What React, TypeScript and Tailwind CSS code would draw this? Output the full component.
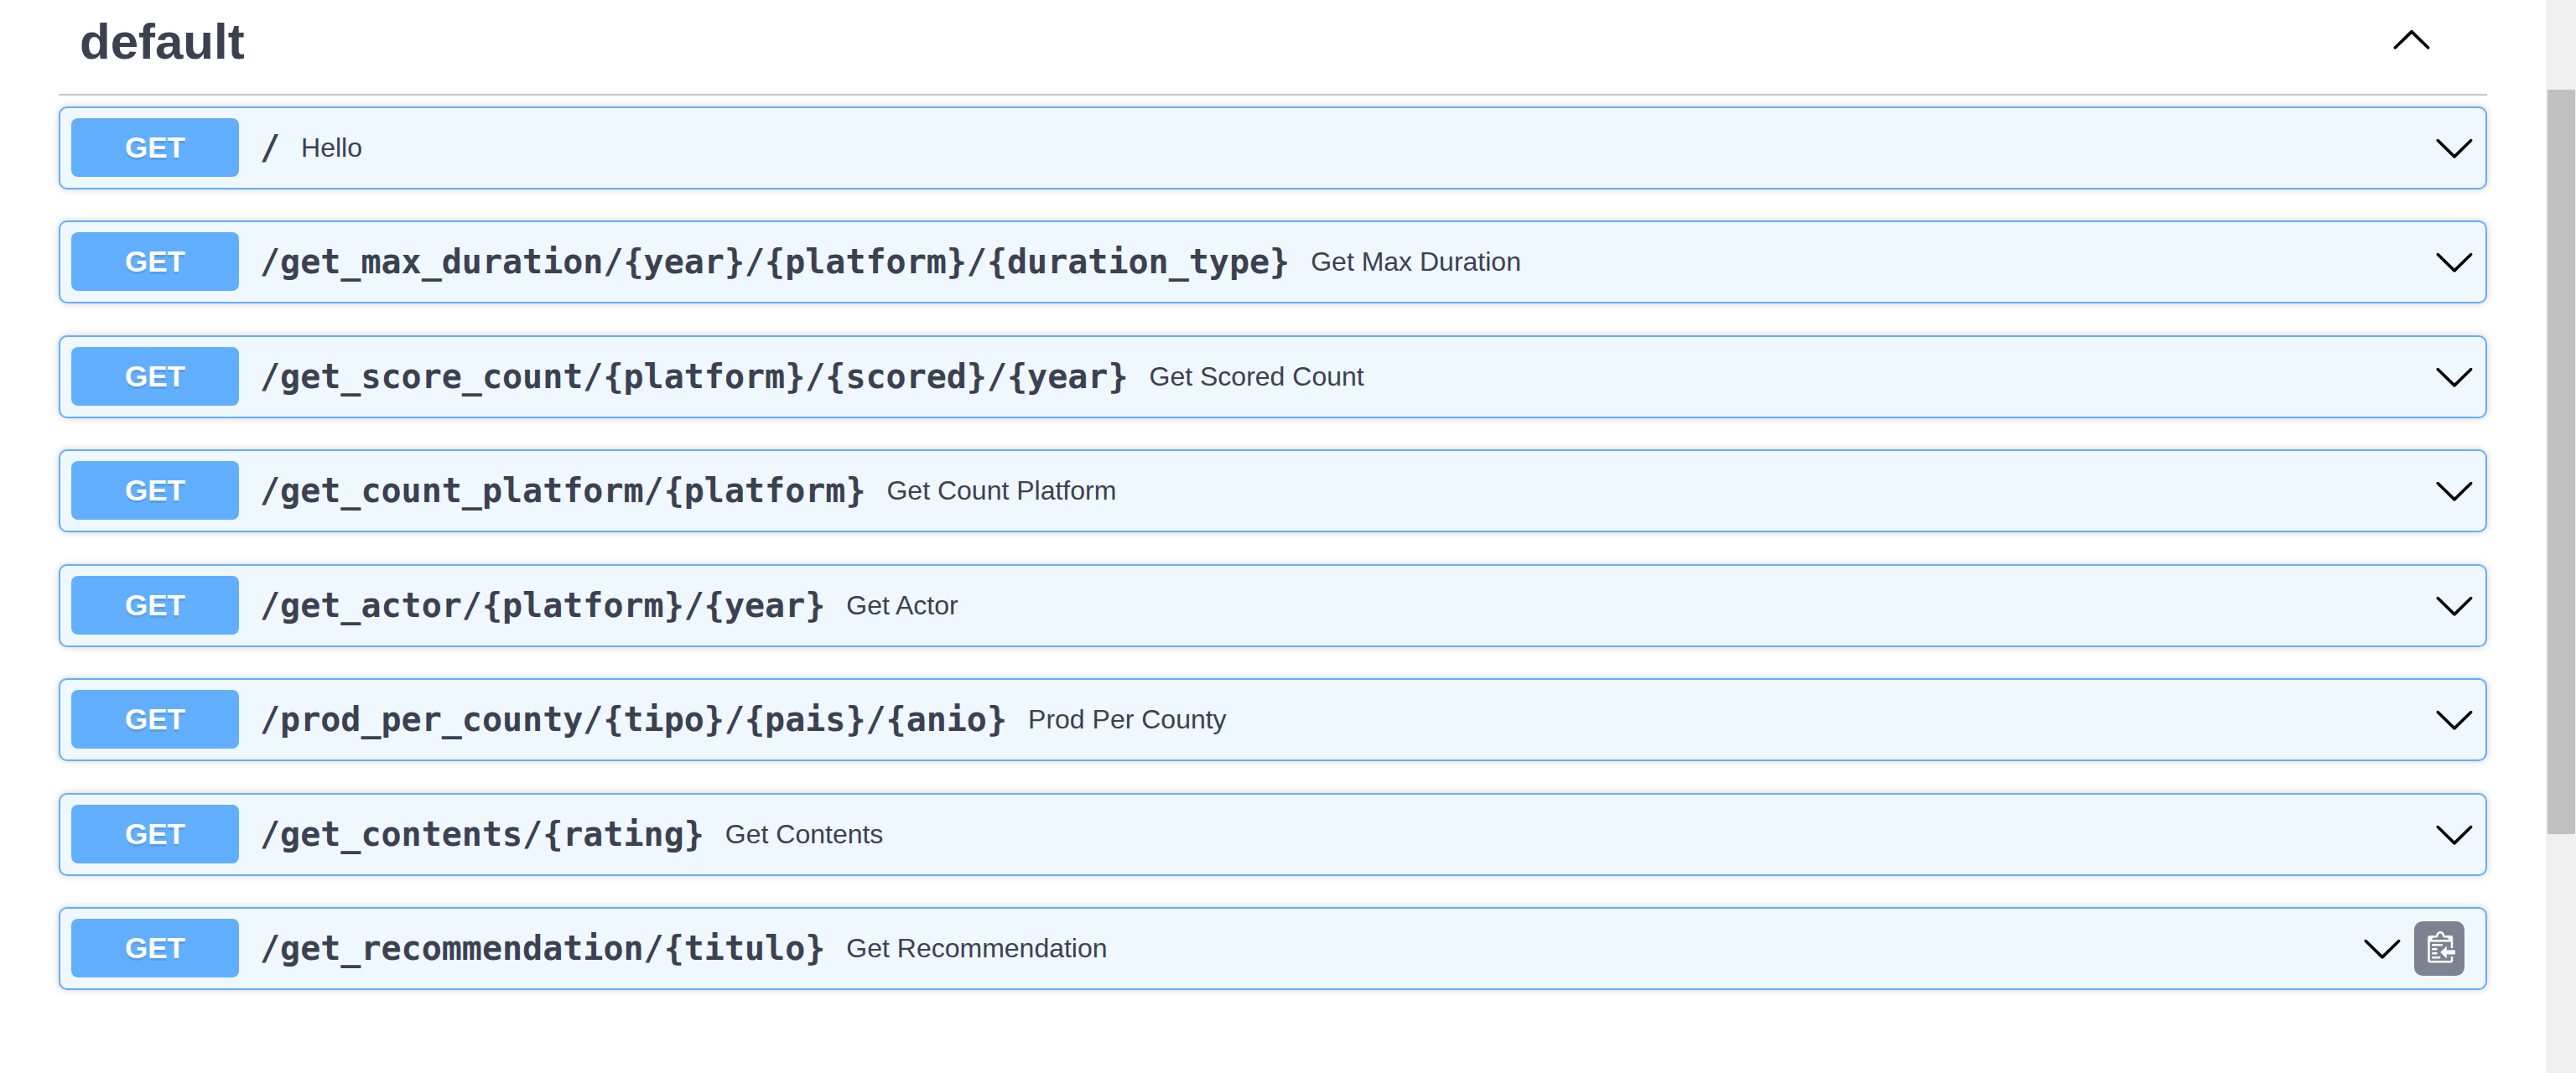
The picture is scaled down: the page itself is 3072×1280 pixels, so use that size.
const operations = [
  { path: '/', summary: 'Hello' },
  { path: '/get_max_duration/{year}/{platform}/{duration_type}', summary: 'Get Max Duration' },
  { path: '/get_score_count/{platform}/{scored}/{year}', summary: 'Get Scored Count' },
  { path: '/get_count_platform/{platform}', summary: 'Get Count Platform' },
  { path: '/get_actor/{platform}/{year}', summary: 'Get Actor' },
  { path: '/prod_per_county/{tipo}/{pais}/{anio}', summary: 'Prod Per County' },
  { path: '/get_contents/{rating}', summary: 'Get Contents' },
  { path: '/get_recommendation/{titulo}', summary: 'Get Recommendation', copy: true },
];

function ChevronDown() {
  return (
    <svg viewBox="0 0 20 20" className="size-[50px] shrink-0 fill-black" aria-hidden="true">
      <path d="M17.418 6.109c.272-.268.709-.268.979 0s.271.701 0 .969l-7.908 7.83c-.27.268-.707.268-.979 0l-7.908-7.83c-.27-.268-.27-.701 0-.969.271-.268.709-.268.979 0L10 13.25l7.418-7.141z" />
    </svg>
  );
}

function ChevronUp() {
  return (
    <svg viewBox="0 0 20 20" className="size-[50px] fill-black" aria-hidden="true">
      <path d="M17.418 14.908c.272.268.709.268.979 0s.271-.701 0-.969l-7.908-7.83c-.27-.268-.707-.268-.979 0l-7.908 7.83c-.27.268-.27.701 0 .969.271.268.709.268.979 0L10 7.767l7.418 7.141z" />
    </svg>
  );
}

function CopyIcon() {
  return (
    <svg viewBox="0 0 15 16" className="h-10 w-[38px] fill-white" aria-hidden="true">
      <path
        transform="translate(2 -1)"
        fillRule="evenodd"
        d="M2 13h4v1H2v-1zm5-6H2v1h5V7zm2 3V8l-3 3 3 3v-2h5v-2H9zM4.5 9H2v1h2.5V9zM2 12h2.5v-1H2v1zm9 1h1v2c-.02.28-.11.52-.3.7-.19.18-.42.28-.7.3H1c-.55 0-1-.45-1-1V4c0-.55.45-1 1-1h3c0-1.11.89-2 2-2 1.11 0 2 .89 2 2h3c.55 0 1 .45 1 1v5h-1V6H1v9h10v-2zM2 5h8c0-.55-.45-1-1-1H8c-.55 0-1-.45-1-1s-.45-1-1-1-1 .45-1 1-.45 1-1 1H3c-.55 0-1 .45-1 1z"
      />
    </svg>
  );
}

export default function App() {
  return (
    <div className="flex min-h-screen bg-white font-['Liberation_Sans',Arial,sans-serif] text-[#3b4151]">
      <main className="min-w-0 flex-1 px-[70px]">
        <header className="flex items-center justify-between border-b-2 border-[#c4c4cb] pt-1 pr-[65px] pb-6 pl-[25px]">
          <h1 className="pt-2 text-[60px] leading-[76px] font-bold">default</h1>
          <button type="button" aria-label="Collapse default section">
            <ChevronUp />
          </button>
        </header>
        <ul className="pt-[13px]">
          {operations.map((op) => (
            <li
              key={op.path}
              className="mb-[37px] flex items-center rounded-[10px] border-2 border-[#61affe] bg-[#eff7ff] pt-3 pr-3 pb-[13px] pl-[13px] shadow-[0_0_8px_rgba(0,0,0,0.19)] even:mb-[38px]"
            >
              <button type="button" className="flex min-w-0 flex-1 items-center text-left">
                <span className="w-[200px] rounded-lg bg-[#61affe] text-center text-[35px] leading-[70px] font-bold text-white [text-shadow:0_3px_0_rgba(0,0,0,0.1)]">
                  GET
                </span>
                <span className="px-[25px] font-['DejaVu_Sans_Mono',monospace] text-[40px] leading-[50px] font-bold">
                  {op.path}
                </span>
                <span className="flex-1 text-[32px] leading-[50px]">{op.summary}</span>
                <ChevronDown />
              </button>
              {op.copy && (
                <button
                  type="button"
                  aria-label="Copy path to clipboard"
                  className="mx-[13px] flex h-[65px] w-[60px] items-center justify-center rounded-[10px] bg-[#7d8293]"
                >
                  <CopyIcon />
                </button>
              )}
            </li>
          ))}
        </ul>
      </main>
      <div className="w-9 bg-[#f0f0f0] pt-[107px] pr-px pl-0.5" aria-hidden="true">
        <div className="h-[888px] bg-[#c0c0c0]" />
      </div>
    </div>
  );
}
